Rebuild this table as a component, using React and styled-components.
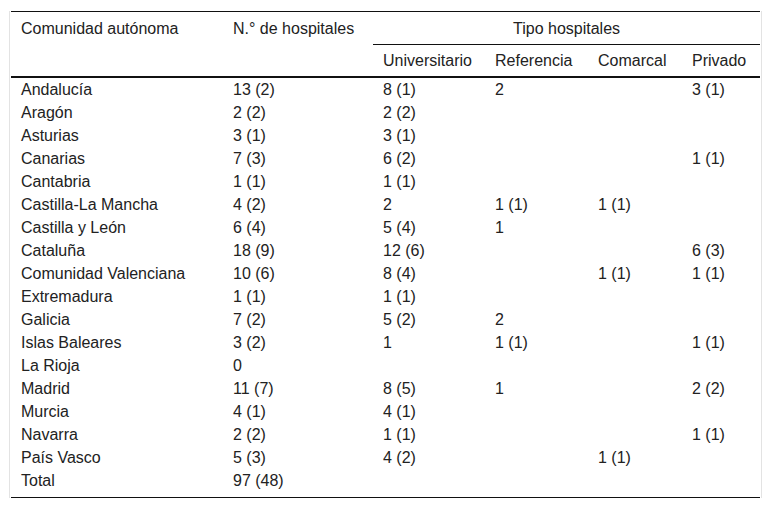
import { styled, createGlobalStyle } from "styled-components";

const GlobalStyle = createGlobalStyle`
    body {
        margin: 0;
        background-color: white;
        font-family: "Liberation Sans", Arial, sans-serif;
    }
`;

const rows = [
    ["Andalucía", "13 (2)", "8 (1)", "2", "", "3 (1)"],
    ["Aragón", "2 (2)", "2 (2)", "", "", ""],
    ["Asturias", "3 (1)", "3 (1)", "", "", ""],
    ["Canarias", "7 (3)", "6 (2)", "", "", "1 (1)"],
    ["Cantabria", "1 (1)", "1 (1)", "", "", ""],
    ["Castilla-La Mancha", "4 (2)", "2", "1 (1)", "1 (1)", ""],
    ["Castilla y León", "6 (4)", "5 (4)", "1", "", ""],
    ["Cataluña", "18 (9)", "12 (6)", "", "", "6 (3)"],
    ["Comunidad Valenciana", "10 (6)", "8 (4)", "", "1 (1)", "1 (1)"],
    ["Extremadura", "1 (1)", "1 (1)", "", "", ""],
    ["Galicia", "7 (2)", "5 (2)", "2", "", ""],
    ["Islas Baleares", "3 (2)", "1", "1 (1)", "", "1 (1)"],
    ["La Rioja", "0", "", "", "", ""],
    ["Madrid", "11 (7)", "8 (5)", "1", "", "2 (2)"],
    ["Murcia", "4 (1)", "4 (1)", "", "", ""],
    ["Navarra", "2 (2)", "1 (1)", "", "", "1 (1)"],
    ["País Vasco", "5 (3)", "4 (2)", "", "1 (1)", ""],
    ["Total", "97 (48)", "", "", "", ""],
];

const widths = [212, 150, 112, 103, 94, 78];

const App = () => {
    return (
        <Page>
            <GlobalStyle />
            <Frame>
                <Table>
                    <colgroup>
                        {widths.map((w, i) => <col key={i} style={{ width: w }} />)}
                    </colgroup>
                    <thead>
                        <tr>
                            <HeadCell rowSpan={2}>Comunidad autónoma</HeadCell>
                            <HeadCell rowSpan={2}>N.° de hospitales</HeadCell>
                            <GroupCell colSpan={4}>Tipo hospitales</GroupCell>
                        </tr>
                        <tr>
                            <SubCell>Universitario</SubCell>
                            <SubCell>Referencia</SubCell>
                            <SubCell>Comarcal</SubCell>
                            <SubCell>Privado</SubCell>
                        </tr>
                    </thead>
                    <tbody>
                        {rows.map((row, i) => (
                            <Row key={i} $last={i === rows.length - 1}>
                                {row.map((cell, j) => <Cell key={j}>{cell}</Cell>)}
                            </Row>
                        ))}
                    </tbody>
                </Table>
            </Frame>
        </Page>
    );
};

const Page = styled.div`
    padding: 11px 0 0 9px;
`;

const Frame = styled.div`
    width: 751px;
    border-left: 1px solid #e3e3e3;
    border-right: 1px solid #e3e3e3;
`;

const Table = styled.table`
    width: 749px;
    margin-left: 1px;
    border-collapse: collapse;
    table-layout: fixed;
    border-top: 1px solid #111;
    border-bottom: 1px solid #111;
    color: #222;
    font-family: "Liberation Sans", Arial, sans-serif;
    font-size: 16px;
    & thead {
        border-bottom: 2px solid #111;
    }
`;

const HeadCell = styled.th`
    font-weight: normal;
    text-align: left;
    vertical-align: top;
    padding: 8px 10px 0 10px;
    line-height: 17px;
`;

const GroupCell = styled.th`
    font-weight: normal;
    text-align: center;
    height: 33px;
    padding: 0 10px;
    line-height: 17px;
    box-sizing: border-box;
    border-bottom: 1px solid #111;
`;

const SubCell = styled.th`
    font-weight: normal;
    text-align: left;
    height: 31px;
    padding: 0 10px;
    line-height: 17px;
    white-space: nowrap;
`;

const Row = styled.tr`
    & > td {
        padding-bottom: ${(props) => (props.$last ? "5px" : "0")};
    }
`;

const Cell = styled.td`
    padding: 0 10px;
    line-height: 23px;
    height: 23px;
    white-space: nowrap;
    vertical-align: top;
`;

export default App;
